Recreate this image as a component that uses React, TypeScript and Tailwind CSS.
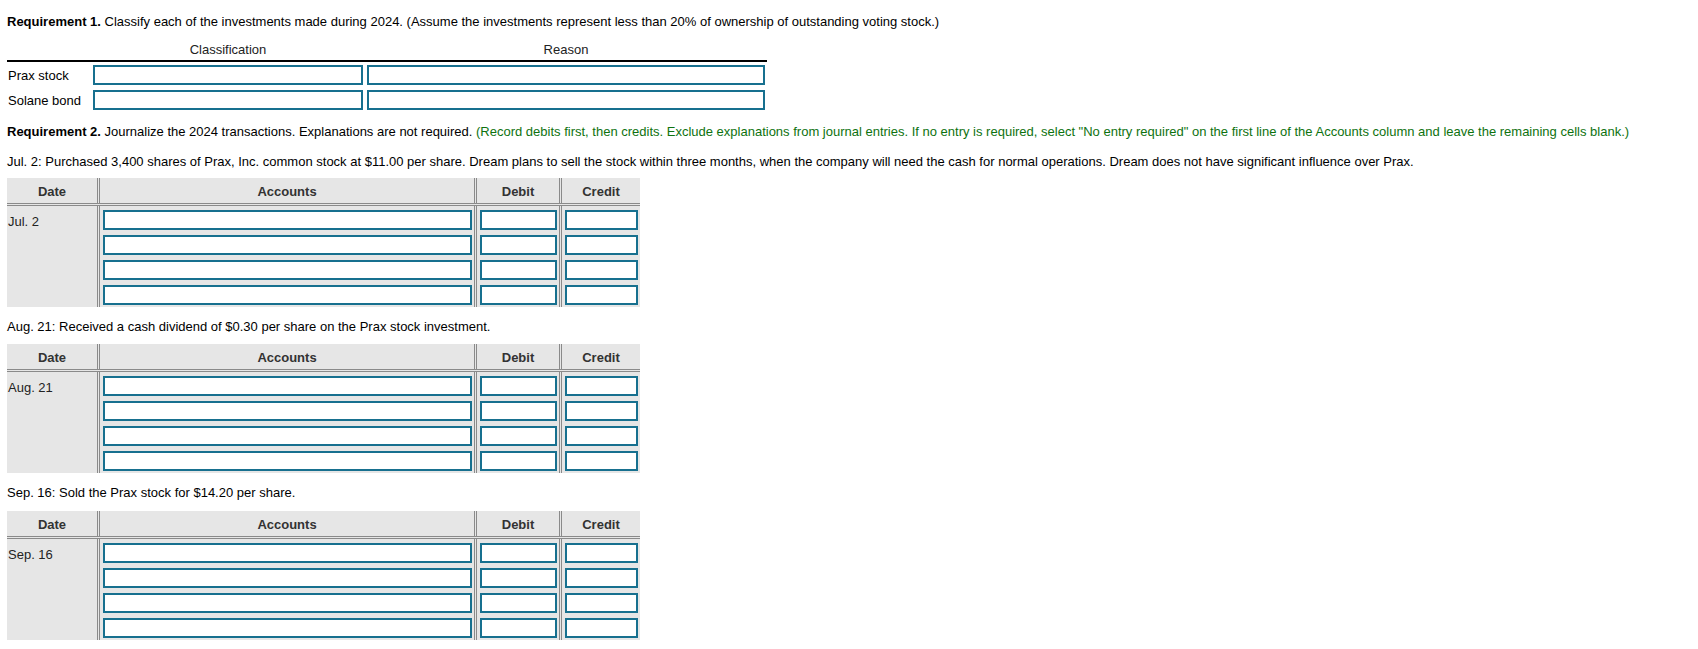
import React from "react";

const inputCls =
  "block w-full h-[20px] border-2 border-[#17708f] bg-white outline-none";

function JournalTable({ date }: { date: string }) {
  const rows = [0, 1, 2, 3];
  const col = (w: string) => (
    <div className={`${w} shrink-0 border-l-[3px] border-double border-[#8a8a8a] pl-[3px] pr-[2px] pt-[4px] pb-[2px] flex flex-col gap-[5px]`}>
      {rows.map((r) => (
        <input key={r} type="text" className={inputCls} />
      ))}
    </div>
  );
  return (
    <div className="w-[633px] bg-[#e6e6e6]">
      <div className="flex h-[28px] border-b-[3px] border-double border-[#8a8a8a] font-bold text-[#333333]">
        <div className="w-[90px] shrink-0 flex items-center justify-center pt-[3px]">Date</div>
        <div className="w-[377px] shrink-0 border-l-[3px] border-double border-[#8a8a8a] flex items-center justify-center pt-[3px]">Accounts</div>
        <div className="w-[85px] shrink-0 border-l-[3px] border-double border-[#8a8a8a] flex items-center justify-center pt-[3px]">Debit</div>
        <div className="w-[81px] shrink-0 border-l-[3px] border-double border-[#8a8a8a] flex items-center justify-center pt-[3px]">Credit</div>
      </div>
      <div className="flex">
        <div className="w-[90px] shrink-0 pl-[1px] pt-[8px] text-[#222222]">{date}</div>
        {col("w-[377px]")}
        {col("w-[85px]")}
        {col("w-[81px]")}
      </div>
    </div>
  );
}

export default function App() {
  return (
    <div className="bg-white min-h-[649px] pl-[7px] pt-[14px] text-[13px] leading-[16px] text-black font-['Liberation_Sans_Narrow','Arial_Narrow','Liberation_Sans',Arial,sans-serif]">
      <p>
        <span className="font-bold">Requirement 1.</span> Classify each of the investments made during 2024. (Assume the investments represent less than 20% of ownership of outstanding voting stock.)
      </p>

      <div className="mt-[10px] w-[760px]">
        <div className="flex h-[22px] border-b-2 border-black text-[#222222]">
          <div className="w-[86px] shrink-0" />
          <div className="w-[270px] shrink-0 text-center pt-[2px]">Classification</div>
          <div className="w-[4px] shrink-0" />
          <div className="w-[398px] shrink-0 text-center pt-[2px]">Reason</div>
        </div>
        <div className="flex items-center gap-[4px] mt-[3px]">
          <div className="w-[82px] shrink-0 pl-[1px] pt-[2px]">Prax stock</div>
          <input type="text" className="h-[20px] w-[270px] border-2 border-[#17708f] outline-none" />
          <input type="text" className="h-[20px] w-[398px] border-2 border-[#17708f] outline-none" />
        </div>
        <div className="flex items-center gap-[4px] mt-[5px]">
          <div className="w-[82px] shrink-0 pl-[1px] pt-[2px]">Solane bond</div>
          <input type="text" className="h-[20px] w-[270px] border-2 border-[#17708f] outline-none" />
          <input type="text" className="h-[20px] w-[398px] border-2 border-[#17708f] outline-none" />
        </div>
      </div>

      <p className="mt-[14px]">
        <span className="font-bold">Requirement 2.</span> Journalize the 2024 transactions. Explanations are not required.{" "}
        <span className="text-[#0e720f]">
          (Record debits first, then credits. Exclude explanations from journal entries. If no entry is required, select "No entry required" on the first line of the Accounts column and leave the remaining cells blank.)
        </span>
      </p>

      <p className="mt-[14px]">
        Jul. 2: Purchased 3,400 shares of Prax, Inc. common stock at $11.00 per share. Dream plans to sell the stock within three months, when the company will need the cash for normal operations. Dream does not have significant influence over Prax.
      </p>
      <div className="mt-[8px]">
        <JournalTable date="Jul. 2" />
      </div>

      <p className="mt-[12px]">Aug. 21: Received a cash dividend of $0.30 per share on the Prax stock investment.</p>
      <div className="mt-[9px]">
        <JournalTable date="Aug. 21" />
      </div>

      <p className="mt-[12px]">Sep. 16: Sold the Prax stock for $14.20 per share.</p>
      <div className="mt-[10px]">
        <JournalTable date="Sep. 16" />
      </div>
    </div>
  );
}
